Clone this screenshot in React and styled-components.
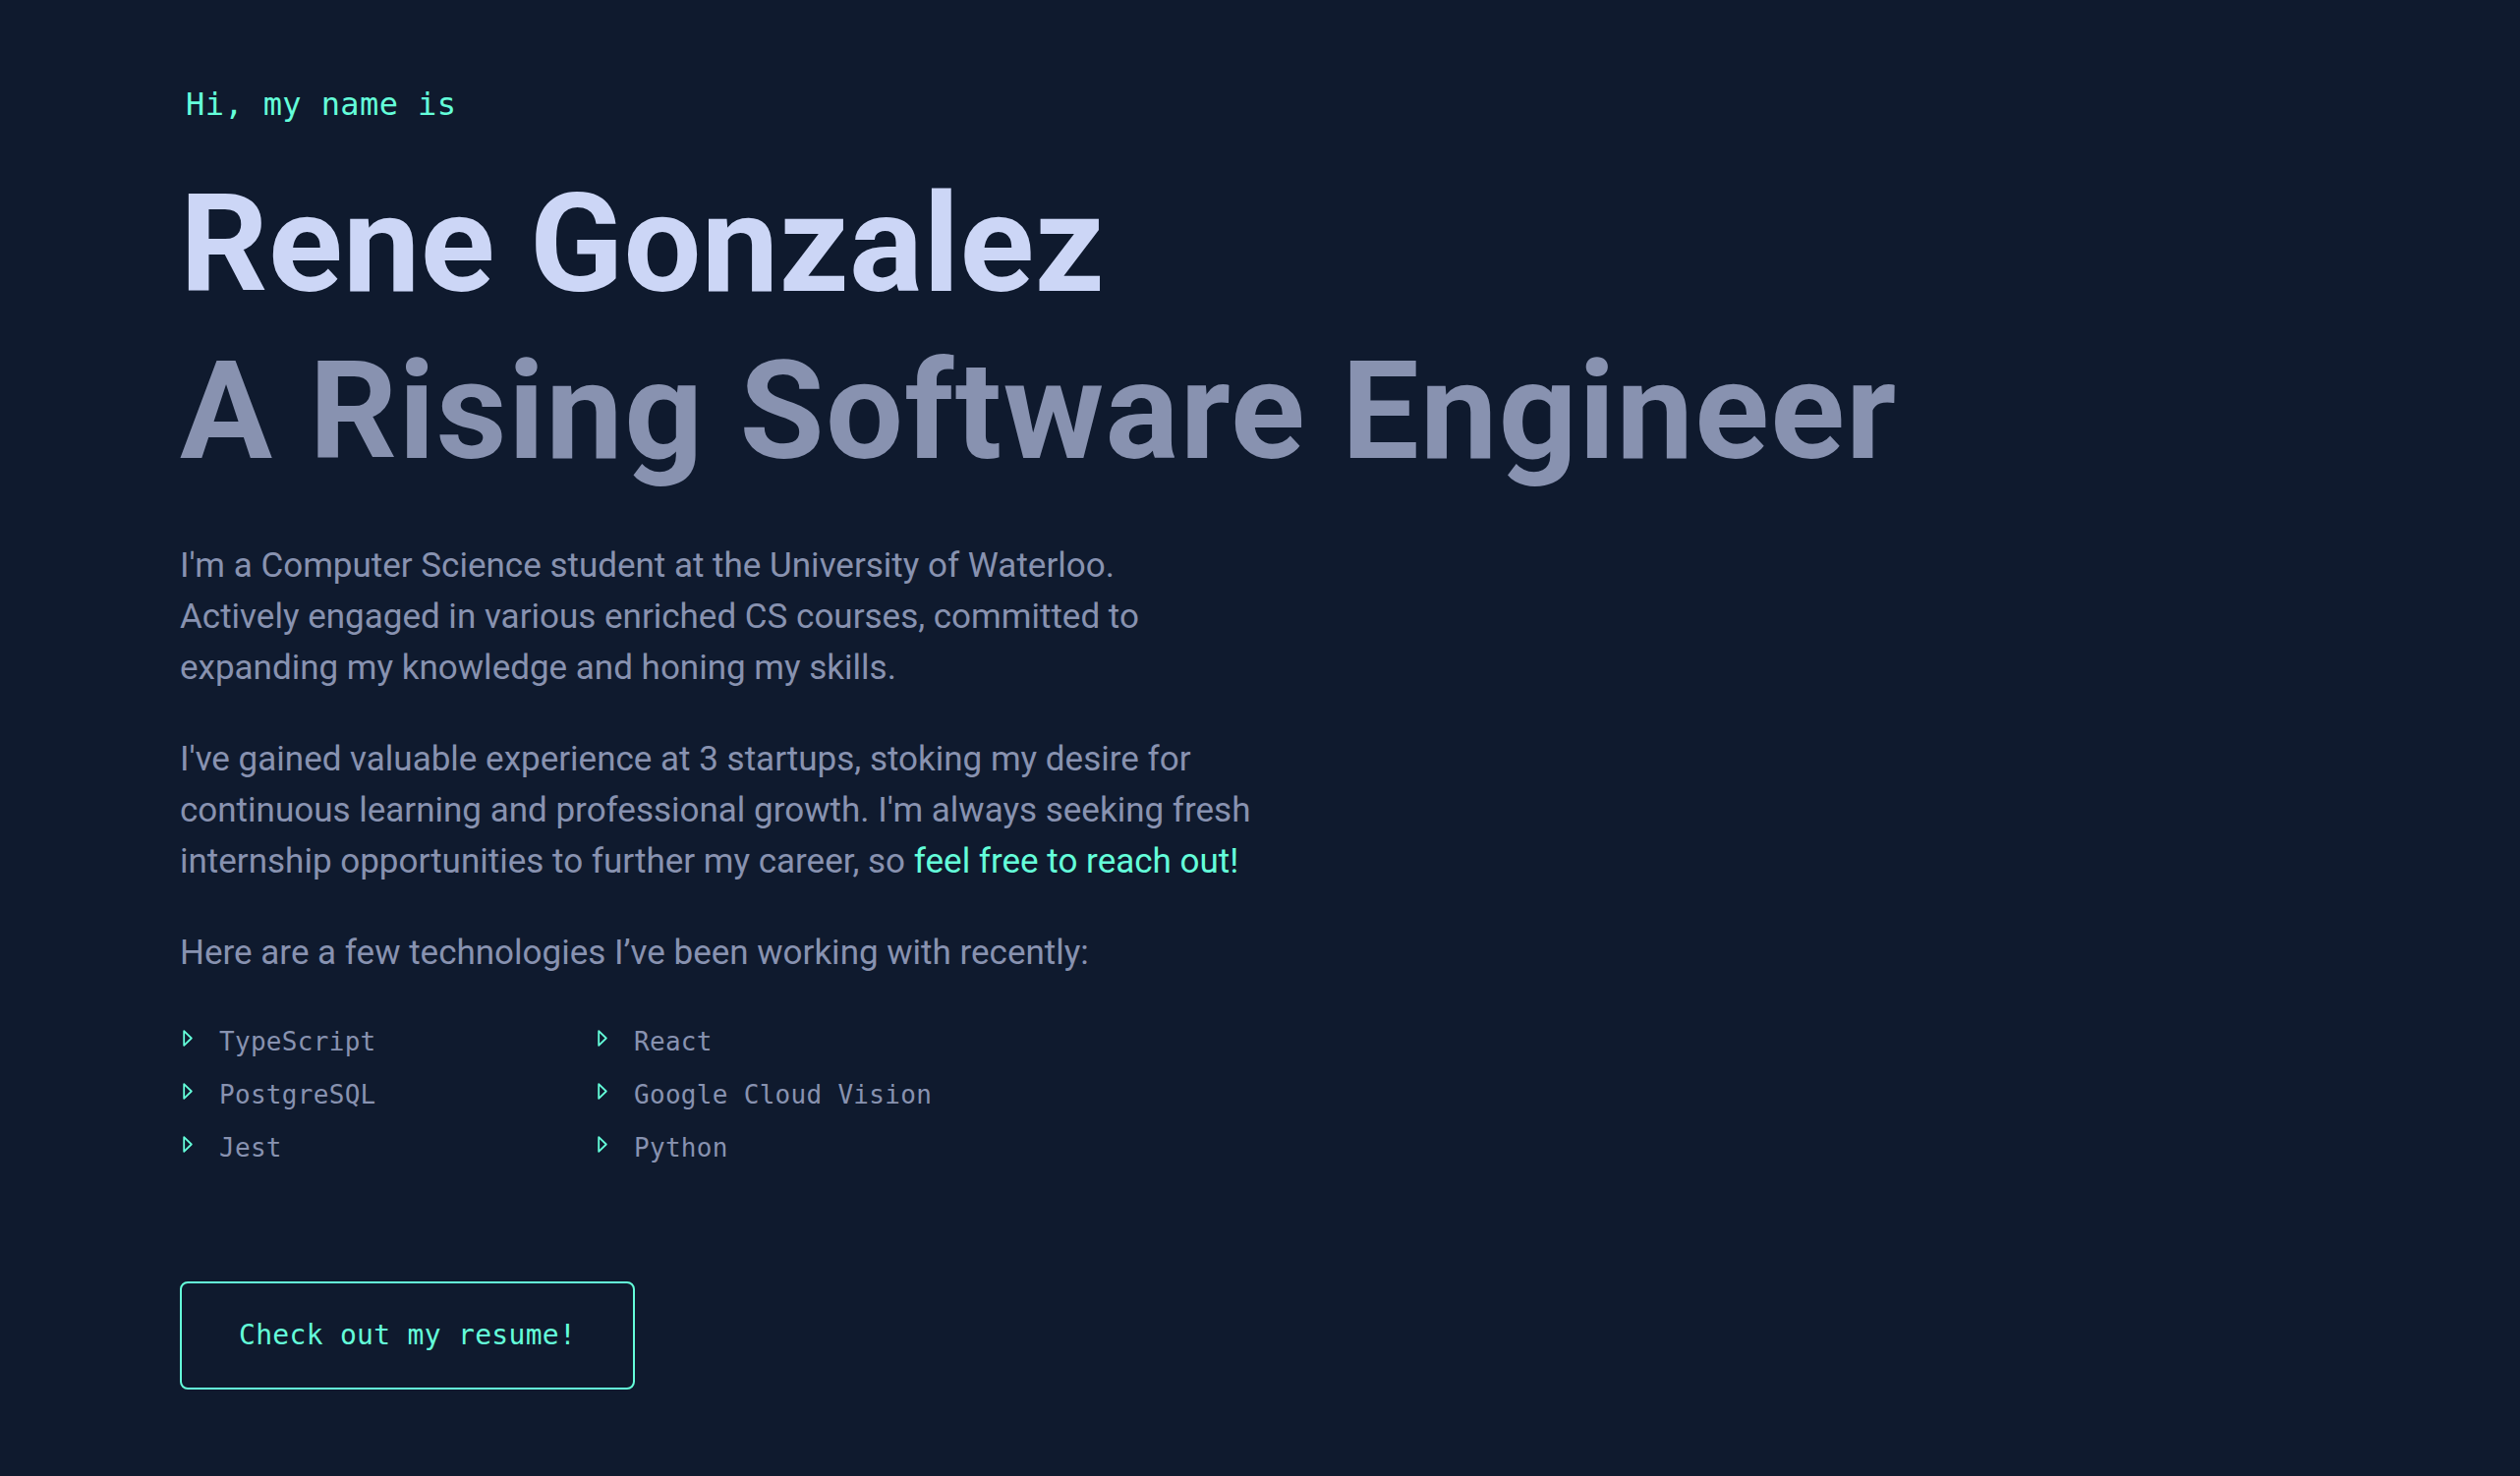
import React from "react";
import styled, { createGlobalStyle } from "styled-components";

const GlobalStyle = createGlobalStyle`
  html, body { margin: 0; padding: 0; }
  body {
    background: #0f1a2e;
    color: #8892b0;
    font-family: Roboto, "Liberation Sans", sans-serif;
    -webkit-font-smoothing: antialiased;
  }
`;

const Page = styled.main`
  min-height: 100vh;
  box-sizing: border-box;
  padding: 90px 0 80px 183px;
  display: flex;
  flex-direction: column;
  align-items: flex-start;
`;

const Intro = styled.h1`
  margin: 0 0 49px 6px;
  font-family: "DejaVu Sans Mono", "Liberation Mono", monospace;
  font-size: 32px;
  line-height: 1;
  font-weight: 400;
  letter-spacing: 0.4px;
  color: #64ffda;
`;

const BigHeading = styled.h2`
  margin: ${p => (p.$sub ? "16px 0 0" : "0")};
  font-family: Roboto, "Liberation Sans", sans-serif;
  font-size: 140px;
  line-height: 1.1;
  font-weight: 700;
  letter-spacing: ${p => (p.$sub ? "1.3px" : "0.3px")};
  color: ${p => (p.$sub ? "#8892b0" : "#ccd6f6")};
`;

const Bio = styled.div`
  margin-top: 55px;
  max-width: 1100px;
  display: flex;
  flex-direction: column;
  gap: 41px;
`;

const Para = styled.p`
  margin: 0;
  font-size: 35px;
  line-height: 52px;
  color: #8892b0;
`;

const Accent = styled.a`
  color: #64ffda;
  text-decoration: none;
`;

const SkillList = styled.ul`
  list-style: none;
  margin: 47px 0 0;
  padding: 0;
  display: grid;
  grid-template-columns: 400px 400px;
  column-gap: 22px;
  row-gap: 20px;
`;

const Skill = styled.li`
  display: flex;
  align-items: flex-start;
  font-family: "DejaVu Sans Mono", "Liberation Mono", monospace;
  font-size: 26px;
  line-height: 34px;
  letter-spacing: 0.3px;
  color: #8892b0;
`;

const Bullet = styled.svg`
  flex: none;
  width: 10px;
  height: 17px;
  margin: 5px 27px 0 3px;
`;

const ResumeButton = styled.a`
  margin-top: 119px;
  display: inline-block;
  padding: 39px 58px;
  border: 2px solid #64ffda;
  border-radius: 8px;
  font-family: "DejaVu Sans Mono", "Liberation Mono", monospace;
  font-size: 28px;
  line-height: 1;
  letter-spacing: 0.3px;
  color: #64ffda;
  text-decoration: none;
  background: transparent;
`;

const skills = ["TypeScript", "React", "PostgreSQL", "Google Cloud Vision", "Jest", "Python"];

function Triangle() {
  return (
    <Bullet viewBox="0 0 10 17" aria-hidden="true">
      <polygon points="1.2,1.2 8.8,8.5 1.2,15.8" fill="none" stroke="#64ffda" strokeWidth="1.8" strokeLinejoin="round" />
    </Bullet>
  );
}

export default function App() {
  return (
    <>
      <GlobalStyle />
      <Page>
        <Intro>Hi, my name is</Intro>
        <BigHeading>Rene Gonzalez</BigHeading>
        <BigHeading $sub>A Rising Software Engineer</BigHeading>
        <Bio>
          <Para>
            I'm a Computer Science student at the University of Waterloo.
            <br />
            Actively engaged in various enriched CS courses, committed to expanding my knowledge and honing my skills.
          </Para>
          <Para>
            I've gained valuable experience at 3 startups, stoking my desire for continuous learning and professional
            growth. I'm always seeking fresh internship opportunities to further my career, so{" "}
            <Accent href="#contact">feel free to reach out!</Accent>
          </Para>
          <Para>Here are a few technologies I’ve been working with recently:</Para>
        </Bio>
        <SkillList>
          {skills.map(s => (
            <Skill key={s}>
              <Triangle />
              {s}
            </Skill>
          ))}
        </SkillList>
        <ResumeButton href="#resume">Check out my resume!</ResumeButton>
      </Page>
    </>
  );
}
